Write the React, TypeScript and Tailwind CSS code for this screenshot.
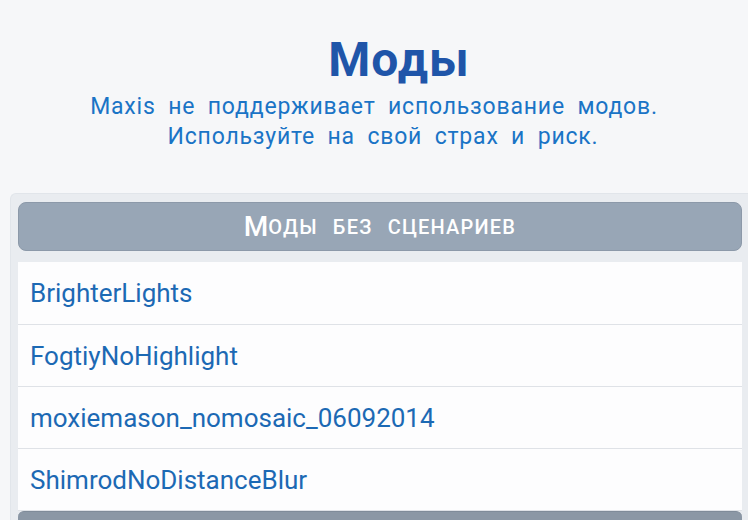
import React from "react";

const items = [
  "BrighterLights",
  "FogtiyNoHighlight",
  "moxiemason_nomosaic_06092014",
  "ShimrodNoDistanceBlur",
];

export default function App() {
  return (
    <div className="w-[748px] h-[520px] overflow-hidden bg-[#f6f7f9] font-['Roboto',sans-serif] flex flex-col">
      <div className="flex flex-col items-center h-[193px] shrink-0">
        <div className="mt-[36px] ml-[50px] h-[48px] leading-[48px] text-[48px] font-bold text-[#1f55a9] tracking-[1px]">
          Моды
        </div>
        <div className="mt-[8px] text-[23px] leading-[30px] text-[#1a74c6] text-center [word-spacing:6px] tracking-[0.8px]">
          <div>Maxis не поддерживает использование модов.</div>
          <div className="ml-[18px]">Используйте на свой страх и риск.</div>
        </div>
      </div>
      <div className="ml-[10px] w-[738px] flex-1 bg-[#e9ecf0] border-t border-l border-[#e1e5ea] rounded-tl-[6px] pt-[8px] pl-[7px] pr-[6px] flex flex-col">
        <div className="h-[49px] shrink-0 rounded-[8px] bg-[#98a6b6] border border-[#8c99a9] flex items-center justify-center text-white font-medium">
          <span className="text-[28px] leading-none">М</span>
          <span className="text-[20px] leading-none tracking-[1.2px] [word-spacing:9px]">ОДЫ БЕЗ СЦЕНАРИЕВ</span>
        </div>
        <div className="h-[11px] shrink-0" />
        <div className="flex flex-col bg-[#fdfdfe]">
          {items.map((t, i) => (
            <div
              key={t}
              className={`${i === 0 ? "h-[63px]" : "h-[62px]"} border-b border-[#dfe2e7] flex items-center pl-[12px] text-[26px] leading-[26px] text-[#1c69b4]`}
            >
              {t}
            </div>
          ))}
        </div>
        <div className="flex-1 rounded-t-[6px] bg-[#8b97a5] border-t border-[#7f8b99]" />
      </div>
    </div>
  );
}
